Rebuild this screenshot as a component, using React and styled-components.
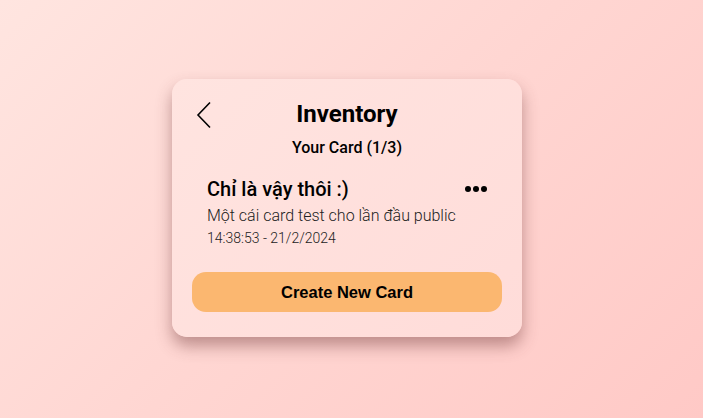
import React from "react";
import styled, { createGlobalStyle } from "styled-components";

const Global = createGlobalStyle`
  html, body { margin: 0; padding: 0; }
  body {
    width: 703px; height: 418px; overflow: hidden;
    background: linear-gradient(135deg, #ffe5e0 0%, #ffd6d2 50%, #ffc9c6 100%);
    font-family: Roboto, "Noto Sans", sans-serif;
  }
`;

const Page = styled.div`
  width: 703px; height: 418px;
  display: flex; align-items: flex-start; justify-content: center;
  padding: 79px 9px 0 0; box-sizing: border-box;
`;

const Card = styled.div`
  width: 350px; height: 258px; box-sizing: border-box; flex-shrink: 0;
  background: linear-gradient(135deg, #ffe4e0, #ffdcd9);
  border-radius: 15px;
  box-shadow: 0 9px 16px rgba(110, 55, 55, 0.45);
  padding: 14px 20px 25px;
  display: flex; flex-direction: column;
`;

const Header = styled.div`
  position: relative; height: 42px;
  display: flex; align-items: center; justify-content: center;
`;

const Back = styled.button`
  position: absolute; left: 4px; top: 8px;
  background: none; border: none; padding: 0; cursor: pointer;
  display: flex;
`;

const Title = styled.h1`
  margin: 0; font-size: 24px; font-weight: 700; color: #000;
  font-family: Roboto, sans-serif;
`;

const Sub = styled.div`
  text-align: center; font-size: 16px; font-weight: 500; color: #000;
  margin-top: 3px; line-height: 20px;
`;

const Item = styled.div`
  margin-top: 19px; padding: 0 14px 0 15px;
`;

const ItemTop = styled.div`
  display: flex; justify-content: space-between; align-items: center;
  line-height: 24px;
`;

const ItemTitle = styled.div`
  font-size: 20px; font-weight: 500; color: #000;
`;

const Desc = styled.div`
  font-size: 16px; font-weight: 300; color: #222; margin-top: 5px; line-height: 20px;
`;

const Time = styled.div`
  font-size: 14px; font-weight: 300; color: #222; margin-top: 3px; line-height: 18px;
`;

const Button = styled.button`
  margin-top: auto; height: 40px; width: 100%;
  border: none; border-radius: 14px; background: #fbb770;
  font-family: "Liberation Sans", Arial, sans-serif; font-weight: 700; font-size: 16.5px;
  color: #000; cursor: pointer;
`;

const Dots = () => (
  <svg width="24" height="8" viewBox="0 0 24 8">
    <circle cx="4" cy="4" r="3" fill="#000" />
    <circle cx="12" cy="4" r="3" fill="#000" />
    <circle cx="20" cy="4" r="3" fill="#000" />
  </svg>
);

export default function App() {
  return (
    <>
      <Global />
      <Page>
        <Card>
          <Header>
            <Back aria-label="back">
              <svg width="16" height="28" viewBox="0 0 16 28">
                <path d="M14 1.5 L2 14 L14 26.5" fill="none" stroke="#000" strokeWidth="1.6" />
              </svg>
            </Back>
            <Title>Inventory</Title>
          </Header>
          <Sub>Your Card (1/3)</Sub>
          <Item>
            <ItemTop>
              <ItemTitle>Chỉ là vậy thôi :)</ItemTitle>
              <Dots />
            </ItemTop>
            <Desc>Một cái card test cho lần đầu public</Desc>
            <Time>14:38:53 - 21/2/2024</Time>
          </Item>
          <Button>Create New Card</Button>
        </Card>
      </Page>
    </>
  );
}
